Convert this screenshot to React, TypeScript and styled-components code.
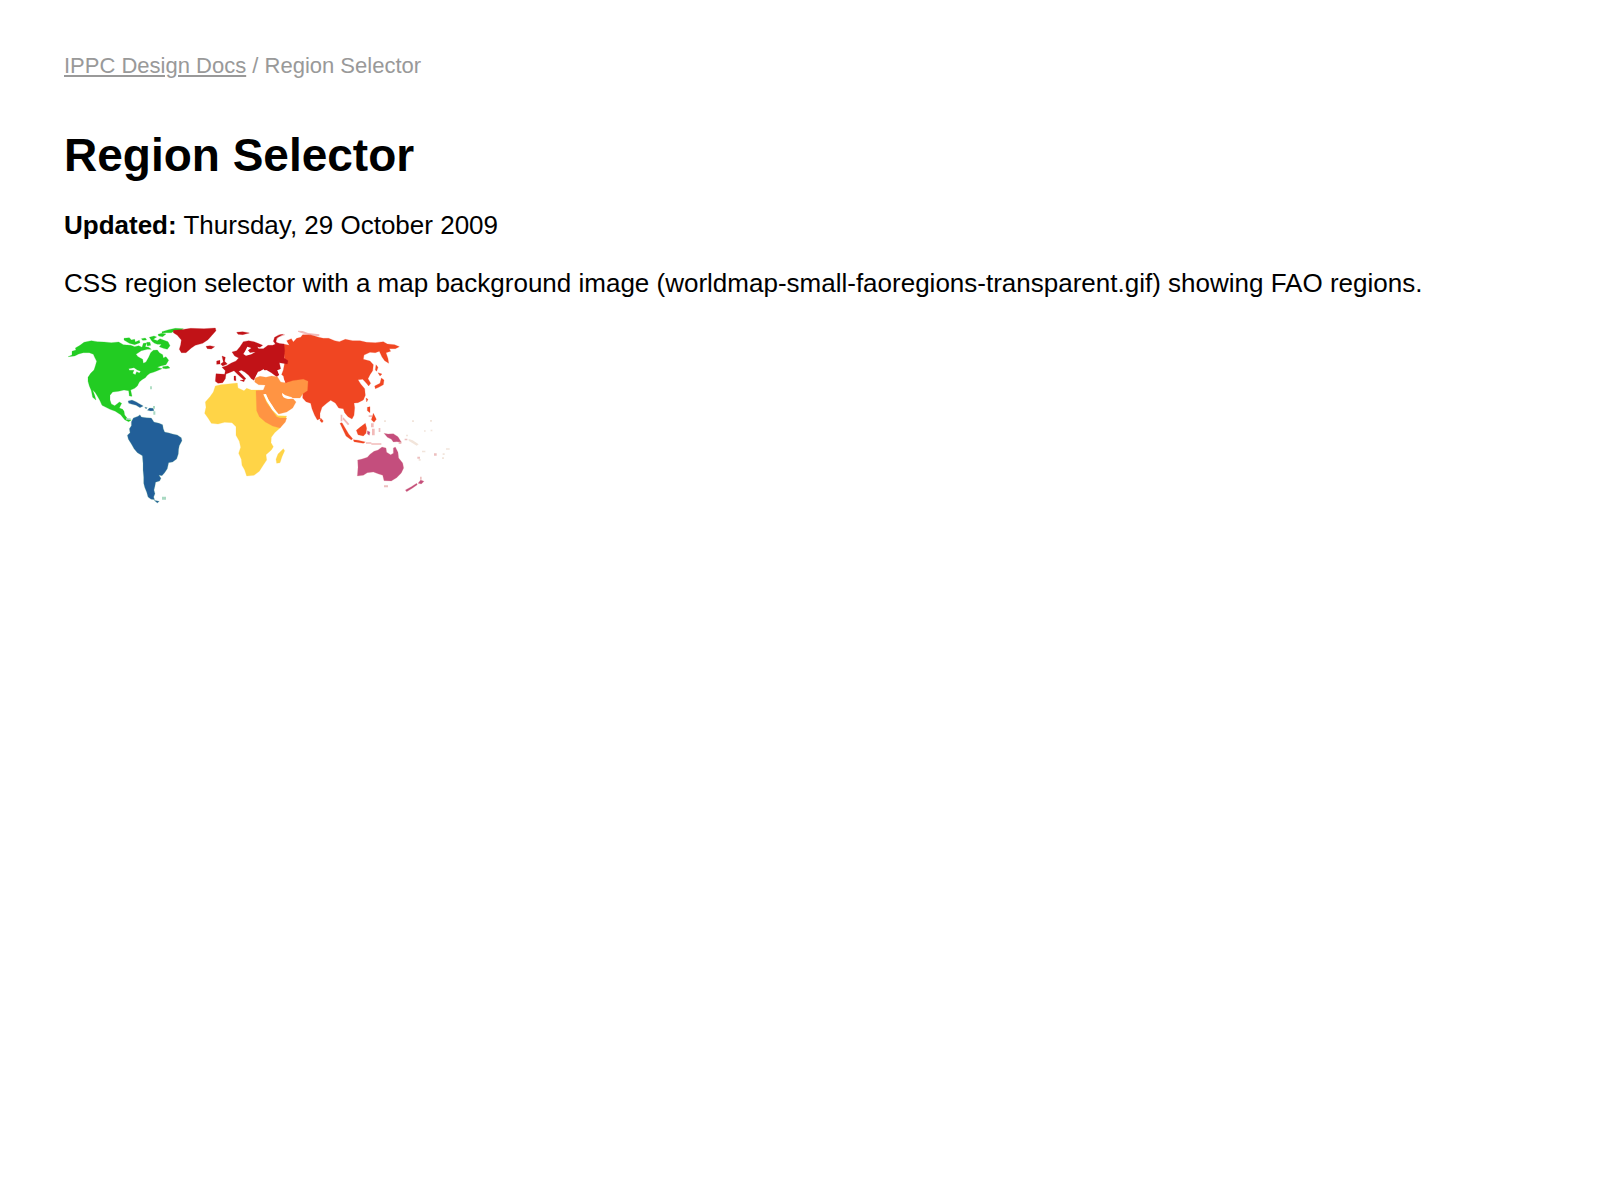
import React from "react";
import styled, { createGlobalStyle } from "styled-components";

const GlobalStyle = createGlobalStyle`
  body {
    margin: 0;
    background: #fff;
    color: #000;
    font-family: "Liberation Sans", Helvetica, Arial, sans-serif;
    font-size: 26px;
    line-height: 32px;
  }
`;

const Page = styled.main`
  padding: 50px 64px;
`;

const Breadcrumb = styled.nav`
  color: #999;
  font-size: 22px;
`;

const CrumbLink = styled.a`
  color: inherit;
  text-decoration: underline;
  text-decoration-thickness: 2px;
  text-underline-offset: 2px;
`;

const Title = styled.h1`
  margin: 45px 0 0;
  font-size: 46px;
  line-height: 56px;
`;

const Paragraph = styled.p`
  margin: 26px 0 0;
`;

const WorldMap = styled.svg`
  display: block;
  width: 400px;
  max-width: 100%;
  margin-top: 21px;
`;

const Region = styled.g<{ $color: string; $edge: string }>`
  fill: ${(p) => p.$color};
  stroke: ${(p) => p.$edge};
  stroke-width: 2px;
  stroke-opacity: 0.35;
  stroke-linejoin: round;
`;

const Islands = styled.path<{ $color: string; $faint?: boolean }>`
  fill: ${(p) => p.$color};
  stroke: none;
  opacity: ${(p) => (p.$faint ? 0.55 : 1)};
`;

export default function App() {
  return (
    <>
      <GlobalStyle />
      <Page>
        <Breadcrumb aria-label="Breadcrumb">
          <CrumbLink href="#docs">IPPC Design Docs</CrumbLink> / Region Selector
        </Breadcrumb>
        <Title>Region Selector</Title>
        <Paragraph>
          <strong>Updated:</strong> Thursday, 29 October 2009
        </Paragraph>
        <Paragraph>
          CSS region selector with a map background image
          (worldmap-small-faoregions-transparent.gif) showing FAO regions.
        </Paragraph>
        <WorldMap viewBox="0 0 1200 570" role="img" aria-label="World map of FAO regions">
          {/* North America */}
          <Region $color="#22cc22" $edge="#22cc22" transform="translate(-12 0)">
            <path d="M24 110L36 105L36 94L48 90L46 84L60 76L72 67L94 62L112 65L132 66L154 68L176 66L190 74L212 76L224 80L236 77L246 82L250 70L260 69L256 80L266 82L274 88L262 88L244 92L228 103L234 110L248 118L250 130L258 126L266 112L272 98L280 91L292 90L298 98L308 104L310 114L318 110L326 121L318 134L302 138L292 142L306 146L290 153L280 157L270 160L262 166L256 173L246 179L238 186L232 198L224 205L212 210L216 229L208 228L206 212L192 210L176 214L158 216L150 226L150 240L154 252L164 257L172 251L178 246L185 250L178 264L188 268L192 274L194 285L204 298L214 300L206 305L194 299L182 284L166 274L150 268L138 262L126 256L120 242L112 228L106 218L98 210L104 226L108 240L98 232L94 212L88 198L84 184L84 172L92 160L102 150L106 138L110 124L104 112L100 103L88 98L70 98L56 102L44 108Z" />
            <path d="M192 55L208 53L214 60L224 58L226 66L238 61L240 68L224 74L208 70L198 64L192 60ZM244 56L256 54L260 60L248 61ZM260 67L270 67L272 76L262 78ZM268 52L282 48L290 51L280 58L292 62L300 56L312 61L324 65L330 77L322 88L310 85L298 80L304 73L292 73L284 70L276 64ZM294 43L306 40L318 42L308 50L296 48ZM306 35L326 29L346 25L370 26L364 31L344 32L334 38L318 38L306 39ZM308 140L324 138L330 144L318 146L308 145Z" />
            <path d="M206 146L222 143L232 150L242 154L238 159L230 155L226 164L218 160L222 151L208 151Z" fill="#fff" />
            <Islands $color="#8ccfa8" d="M271 199h4v9h-4z" />
          </Region>

          {/* Latin America and the Caribbean */}
          <Region $color="#225f99" $edge="#79c39d" transform="translate(138 240)">
            <path d="M64 65L70 54L84 49L90 44L94 51L110 53L124 54L132 66L148 70L158 74L160 86L164 96L178 99L188 102L202 105L214 113L216 122L208 137L206 148L205 162L200 177L188 186L176 188L172 206L164 218L156 227L147 226L153 235L149 243L137 247L135 258L132 270L135 281L131 291L134 299L123 298L114 291L110 277L104 262L101 250L101 232L99 210L99 190L97 167L82 158L72 146L64 132L55 118L52 106L60 98L58 86L64 77Z" />
            <path d="M54 3L66 0L78 5L88 11L100 18L90 23L78 16L66 13L56 10ZM104 21L112 23L108 27ZM118 24L130 25L132 32L122 33L112 31ZM132 301L148 304L142 309Z" />
            <Islands $color="#a9d9c2" d="M156 290h12v9h-12zM129 18h6v8h-6zM130 34h6v10h-6zM48 55h14v4h-14z" />
          </Region>

          {/* Asia */}
          <Region $color="#f04622" $edge="#f04622" transform="translate(618 0)">
            <path d="M40 72L58 76L50 62L64 56L70 66L80 55L92 52L98 44L122 44L146 52L160 55L176 55L194 62L208 65L226 58L248 62L270 62L290 67L316 68L340 65L352 72L374 74L388 80L376 86L358 86L362 94L348 98L354 116L356 130L344 122L336 111L328 94L316 98L300 97L282 105L280 118L300 123L310 134L308 152L300 164L294 176L302 190L296 198L288 188L278 178L264 179L272 192L284 206L286 226L280 240L264 248L252 249L254 263L252 286L246 297L234 290L224 278L220 266L206 264L196 249L182 241L170 250L156 262L150 280L150 296L142 300L134 286L126 266L122 250L108 245L98 234L100 180L46 190L34 166L40 150L44 128Z" />
            <path d="M152 294L160 303L156 308L150 302ZM318 134L324 142L320 154L316 150ZM324 158L336 162L330 168ZM334 174L342 180L340 194L326 202L316 206L314 198L330 190ZM288 234L294 238L290 246ZM292 262L300 260L300 278L292 272ZM310 280L319 298L312 307L304 299ZM210 310L216 308L236 342L248 356L244 360L228 348ZM250 359L264 361L286 366L280 370L252 365ZM259 331L270 322L286 310L290 325L288 340L280 348L264 344Z" />
            <Islands $color="#e78280" $faint d="M84 32l14 1 16 6 34 4v6l-30-3-24-7-10-4zM12 54l12-10 20-2v4l-18 6-6 8zM296 286h10v5h-10zM303 310h8v12h-8zM306 326h8v20h-8zM288 367h16v4h-16zM304 370h30v4h-30zM212 284h5v20h-5zM220 292l18 20-4 4-16-18z" />
          </Region>

          {/* Europe and Greenland */}
          <Region $color="#c11217" $edge="#c11217" transform="translate(408 0)">
            <path d="M-80 31L-56 29L-28 25L12 26L46 24L48 32L34 48L24 59L8 70L-14 76L-26 84L-42 98L-56 98L-62 88L-58 74L-56 60L-68 46L-80 38ZM18 79L30 77L44 80L34 87L22 86Z" />
            <path d="M96 96L110 92L120 80L130 65L146 62L162 65L174 70L188 76L180 82L172 80L176 86L190 86L204 76L218 76L232 70L252 72L254 92L252 114L264 122L262 132L238 128L242 146L232 151L238 164L230 170L214 158L200 150L184 151L174 160L166 170L162 181L154 176L146 166L134 156L124 151L116 154L128 166L138 176L132 180L116 166L102 152L88 158L78 162L76 176L68 188L54 190L46 184L48 161L74 163L76 152L66 142L80 137L94 129L108 123L116 114L104 108Z" />
            <path d="M110 37L128 35L148 39L128 44L114 43ZM66 108L76 112L74 124L82 132L68 138L62 132L70 126ZM50 123L60 121L60 132L50 133ZM220 64L224 52L240 44L250 43L230 54L228 66L238 71L226 72ZM102 168L107 168L108 182L102 181ZM120 181L134 179L132 185Z" />
            <path d="M142 80L136 92L130 102L138 107L154 103L166 96L150 98L144 91L154 84Z" fill="#fff" stroke="none" />
            <path d="M168 168L174 155L184 153L190 147L194 153L204 155L212 164L206 169L184 170Z" fill="#fff" stroke="none" />
            <path d="M232 151L240 150L246 154L240 161L250 168L252 178L256 188L244 184L238 166Z" fill="#fff" stroke="none" />
          </Region>

          {/* Africa */}
          <Region $color="#ffd447" $edge="#ffd447" transform="translate(378 150)">
            <path d="M76 48L92 44L114 42L142 39L144 54L162 62L170 55L184 60L206 60L216 62L246 120L264 137L290 138L284 152L270 174L254 188L244 202L243 218L250 230L244 240L228 254L230 270L218 288L208 304L192 316L170 318L164 300L156 286L154 268L146 250L152 232L148 214L138 196L138 170L126 158L104 157L84 162L64 160L54 144L44 130L48 112L46 96L60 80L70 66Z" />
            <path d="M280 236L284 242L276 260L270 278L260 280L258 268L264 252Z" />
          </Region>

          {/* Near East */}
          <Region $color="#ff9443" $edge="#ff9443" transform="translate(378 150)">
            <path d="M196 24L210 19L228 22L244 18L262 20L272 36L288 39L308 32L340 28L354 34L352 62L340 70L330 84L308 84L288 82L276 70L280 82L294 87L310 87L318 96L308 114L290 126L266 132L248 110L236 90L226 73L220 74L230 98L244 118L260 140L270 144L290 144L286 156L270 174L248 168L226 156L208 140L200 122L198 62L220 60L226 45L206 44L194 36Z" />
            <path d="M220 73L228 72L236 91L248 108L260 129L248 120L230 94Z" fill="#fff" stroke="none" />
            <path d="M276 69L286 76L300 80L308 82L298 86L286 85L278 78Z" fill="#fff" stroke="none" />
          </Region>

          {/* Southwest Pacific */}
          <Region $color="#c44e7d" $edge="#df8b8b" transform="translate(798 210)">
            <path d="M83 210L96 207L112 202L120 193L132 184L144 180L156 171L168 174L170 187L182 194L190 190L190 174L196 171L204 187L206 204L218 219L221 234L214 249L200 263L184 273L162 272L158 256L146 252L130 246L112 248L100 256L82 258L84 232Z" />
            <path d="M162 130L174 132L190 131L204 140L210 150L214 157L200 155L190 156L184 148L172 142ZM112 122L120 126L118 136L112 132ZM272 270L282 274L274 282L264 280ZM262 284L248 294L230 305L226 300L244 290L260 280Z" />
            <Islands $color="#df8b8b" $faint d="M162 286h12v6h-12zM146 114h5v12h-5zM206 154h8v8h-8zM224 146h8v5h-8zM262 200h8v6h-8zM312 190h8v7h-8zM270 260h5v9h-5z" />
            <Islands $color="#e7d0bd" $faint d="M228 134h6v5h-6zM236 147l12 4 18 12-6 4-12-7-12-8zM276 182h10v5h-10zM348 175h11v4h-11zM338 190h6v5h-6zM336 202h6v5h-6zM302 119h5v5h-5zM282 121h5v4h-5zM162 91h6v5h-6zM246 91h6v5h-6zM300 90h6v5h-6zM266 207h6v5h-6z" />
          </Region>
        </WorldMap>
      </Page>
    </>
  );
}
